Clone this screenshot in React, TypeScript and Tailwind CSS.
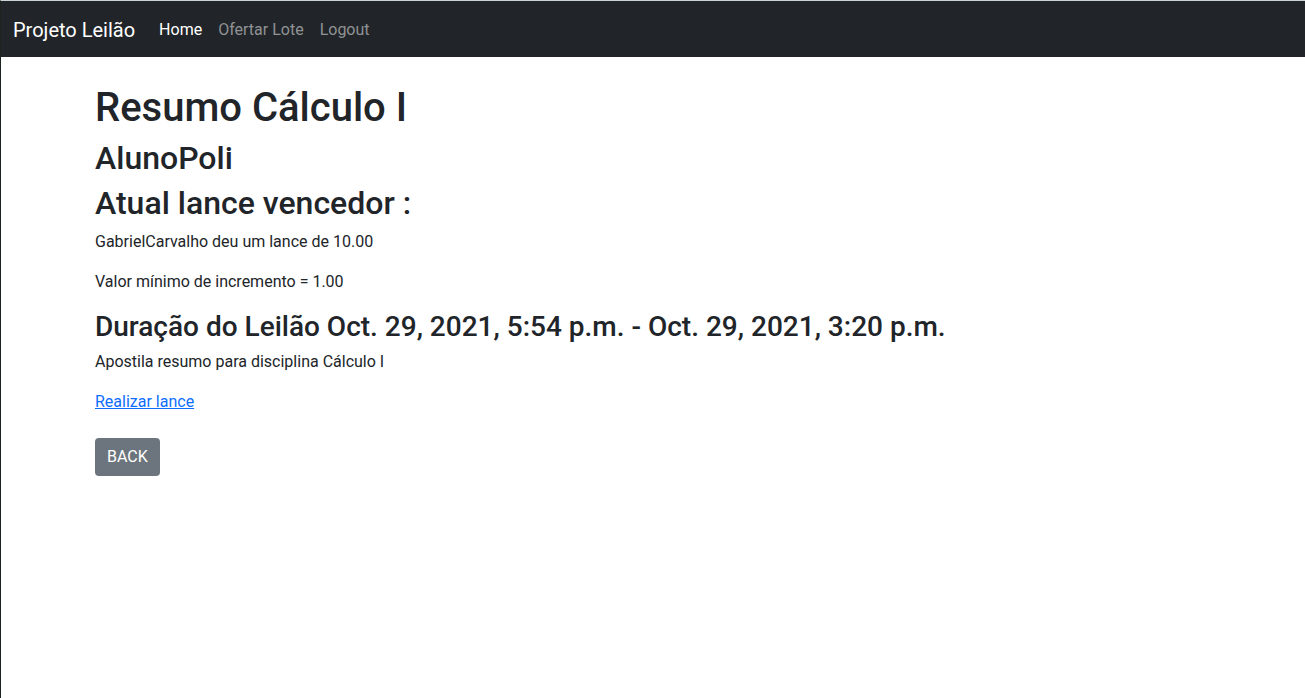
import React from "react";

export default function App() {
  const font = { fontFamily: 'Roboto, "Open Sans", sans-serif' };
  return (
    <div
      style={font}
      className="min-h-[698px] border-t border-t-[#c9d4d2] border-l border-l-[#1d2420] bg-white text-[#212529]"
    >
      <nav className="bg-[#212529] h-[56px] flex items-center px-3 pt-[2px]">
        <a className="text-white text-[20px] leading-[30px] mr-4 py-[5px]">Projeto Leilão</a>
        <ul className="flex items-center text-[16px] leading-6">
          <li><a className="block px-2 py-2 text-white">Home</a></li>
          <li><a className="block px-2 py-2 text-[#909294]">Ofertar Lote</a></li>
          <li><a className="block px-2 py-2 text-[#909294]">Logout</a></li>
        </ul>
      </nav>
      <div className="max-w-[1140px] mx-auto px-3 pt-[27px] text-[16px] leading-6">
        <h1 className="text-[40px] leading-[48px] font-medium mb-[7px]">Resumo Cálculo I</h1>
        <h2 className="text-[32px] leading-[38px] font-medium mb-[7px]">AlunoPoli</h2>
        <h2 className="text-[32px] leading-[38px] font-medium mb-2">Atual lance vencedor :</h2>
        <p className="mb-4">GabrielCarvalho deu um lance de 10.00</p>
        <p className="mb-4">Valor mínimo de incremento = 1.00</p>
        <h3 className="text-[28px] leading-[34px] font-medium mb-[6px] mt-[1px]">
          Duração do Leilão Oct. 29, 2021, 5:54 p.m. - Oct. 29, 2021, 3:20 p.m.
        </h3>
        <p className="mb-4">Apostila resumo para disciplina Cálculo I</p>
        <p className="mb-6">
          <a className="text-[#0d6efd] underline">Realizar lance</a>
        </p>
        <button className="bg-[#6c757d] text-white rounded px-3 h-[38px] leading-[38px] text-[16px]">BACK</button>
      </div>
    </div>
  );
}
